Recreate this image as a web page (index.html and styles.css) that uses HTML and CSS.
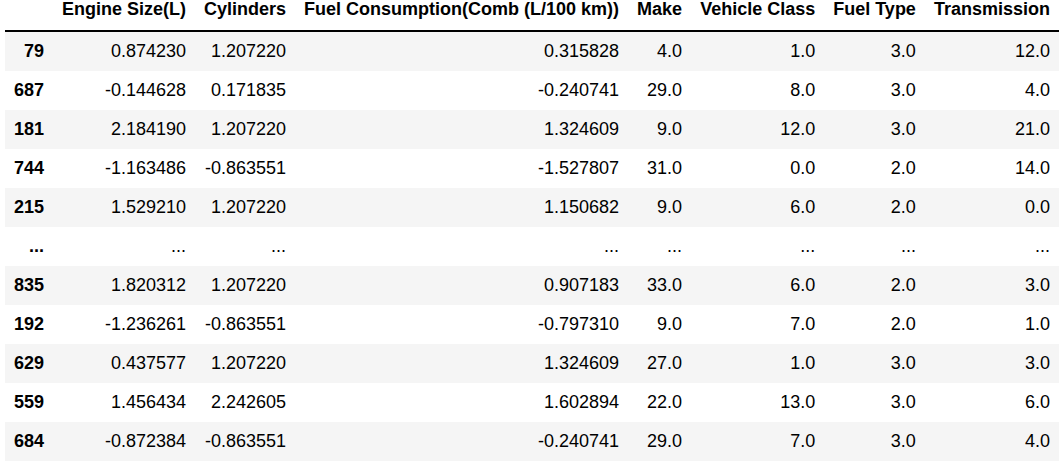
FILE: index.html
```html
<!DOCTYPE html>
<html>
<head>
<meta charset="utf-8">
<link rel="stylesheet" href="styles.css">
</head>
<body>
<div class="output">
<table class="dataframe">
  <thead>
    <tr>
      <th></th>
      <th>Engine Size(L)</th>
      <th>Cylinders</th>
      <th>Fuel Consumption(Comb (L/100 km))</th>
      <th>Make</th>
      <th>Vehicle Class</th>
      <th>Fuel Type</th>
      <th>Transmission</th>
    </tr>
  </thead>
  <tbody>
    <tr><th>79</th><td>0.874230</td><td>1.207220</td><td>0.315828</td><td>4.0</td><td>1.0</td><td>3.0</td><td>12.0</td></tr>
    <tr><th>687</th><td>-0.144628</td><td>0.171835</td><td>-0.240741</td><td>29.0</td><td>8.0</td><td>3.0</td><td>4.0</td></tr>
    <tr><th>181</th><td>2.184190</td><td>1.207220</td><td>1.324609</td><td>9.0</td><td>12.0</td><td>3.0</td><td>21.0</td></tr>
    <tr><th>744</th><td>-1.163486</td><td>-0.863551</td><td>-1.527807</td><td>31.0</td><td>0.0</td><td>2.0</td><td>14.0</td></tr>
    <tr><th>215</th><td>1.529210</td><td>1.207220</td><td>1.150682</td><td>9.0</td><td>6.0</td><td>2.0</td><td>0.0</td></tr>
    <tr><th>...</th><td>...</td><td>...</td><td>...</td><td>...</td><td>...</td><td>...</td><td>...</td></tr>
    <tr><th>835</th><td>1.820312</td><td>1.207220</td><td>0.907183</td><td>33.0</td><td>6.0</td><td>2.0</td><td>3.0</td></tr>
    <tr><th>192</th><td>-1.236261</td><td>-0.863551</td><td>-0.797310</td><td>9.0</td><td>7.0</td><td>2.0</td><td>1.0</td></tr>
    <tr><th>629</th><td>0.437577</td><td>1.207220</td><td>1.324609</td><td>27.0</td><td>1.0</td><td>3.0</td><td>3.0</td></tr>
    <tr><th>559</th><td>1.456434</td><td>2.242605</td><td>1.602894</td><td>22.0</td><td>13.0</td><td>3.0</td><td>6.0</td></tr>
    <tr><th>684</th><td>-0.872384</td><td>-0.863551</td><td>-0.240741</td><td>29.0</td><td>7.0</td><td>3.0</td><td>4.0</td></tr>
  </tbody>
</table>
</div>
</body>
</html>
```

FILE: styles.css
```css
html, body {
  margin: 0;
  padding: 0;
  background: #fff;
}

.output {
  padding-left: 5px;
  margin-top: -10px;
}

.dataframe {
  border-collapse: collapse;
  border-spacing: 0;
  border: none;
  font-family: "Liberation Sans", Arial, Helvetica, sans-serif;
  font-size: 18px;
  color: #000;
  table-layout: auto;
}

.dataframe thead {
  vertical-align: bottom;
}

.dataframe thead tr {
  border-bottom: 2px solid #000;
}

.dataframe th,
.dataframe td {
  text-align: right;
  vertical-align: middle;
  padding: 9px 9px;
  line-height: normal;
  white-space: nowrap;
  border: none;
}

.dataframe th {
  font-weight: bold;
}

.dataframe thead th {
  padding-bottom: 10px;
}

.dataframe tbody tr:nth-child(odd) {
  background: #f5f5f5;
}
```
